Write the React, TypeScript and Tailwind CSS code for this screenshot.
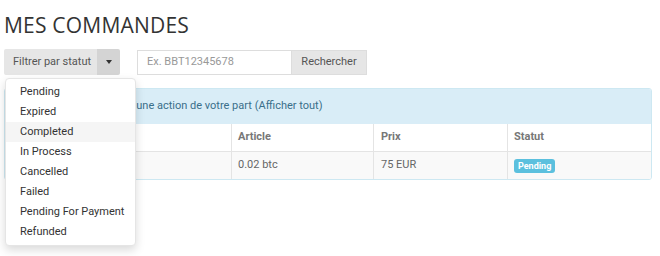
import React from "react";

const items = ["Pending", "Expired", "Completed", "In Process", "Cancelled", "Failed", "Pending For Payment", "Refunded"];

export default function App() {
  return (
    <div className="w-[660px] h-[256px] bg-white overflow-hidden pl-[4px] pr-[8px] pt-[12px]" style={{ fontFamily: "Roboto, 'Liberation Sans', sans-serif" }}>
      <h1 className="text-[21px] leading-[26px] text-[#333] tracking-[0.2px]" style={{ fontFamily: "'Open Sans', sans-serif" }}>MES COMMANDES</h1>
      <div className="flex mt-[11px] h-[26px] gap-[17px]">
        <div className="relative flex">
          <div className="flex items-center whitespace-nowrap h-[26px] bg-[#e6e6e6] text-[#555] text-[11px] pl-[9px] pr-[9px] w-[93px] rounded-l-[2px]">Filtrer par statut</div>
          <div className="flex items-center justify-center h-[26px] w-[23px] bg-[#d4d4d4] rounded-r-[2px]">
            <div className="w-0 h-0 border-l-[3px] border-r-[3px] border-t-[4px] border-l-transparent border-r-transparent border-t-[#333]" />
          </div>
          <div className="absolute left-[1px] top-[29px] w-[131px] bg-white rounded-[4px] border border-[#e5e5e5] shadow-[0_4px_10px_rgba(0,0,0,0.15)] py-[3px] z-10">
            {items.map((it) => (
              <div key={it} className={`h-[20px] leading-[20px] pl-[14px] text-[11px] text-[#333] whitespace-nowrap ${it === "Completed" ? "bg-[#f5f5f5]" : ""}`}>{it}</div>
            ))}
          </div>
        </div>
        <div className="flex h-[25px] mt-[1px]">
          <div className="w-[155px] h-[25px] border border-[#ddd] flex items-center pl-[9px] text-[11px] text-[#999] bg-white">Ex. BBT12345678</div>
          <div className="w-[75px] h-[25px] bg-[#e6e6e6] border border-l-0 border-[#ddd] flex items-center justify-center text-[11px] text-[#555]">Rechercher</div>
        </div>
      </div>
      <div className="mt-[13px] border border-[#cde8f2] rounded-[3px] overflow-hidden w-[648px]">
        <div className="h-[35px] bg-[#d9edf7] flex items-center pl-[6px] text-[11px] text-[#3a6f8a] whitespace-nowrap">
          <span>Commandes en attente d'une action de votre part</span>
          <span className="ml-[3px]">(Afficher tout)</span>
        </div>
        <div className="grid grid-cols-[226px_142px_134px_1fr] text-[11px]">
          <div className="h-[28px] border-b border-[#e4e4e4]" />
          <div className="h-[28px] border-l border-b border-[#e4e4e4] flex items-center pl-[6px] font-bold text-[#777]">Article</div>
          <div className="h-[28px] border-l border-b border-[#e4e4e4] flex items-center pl-[7px] font-bold text-[#777]">Prix</div>
          <div className="h-[28px] border-l border-b border-[#e4e4e4] flex items-center pl-[6px] font-bold text-[#777]">Statut</div>
          <div className="h-[27px] bg-[#f9f9f9]" />
          <div className="h-[27px] bg-[#f9f9f9] border-l border-[#e4e4e4] flex items-center pl-[6px] text-[#666]">0.02 btc</div>
          <div className="h-[27px] bg-[#f9f9f9] border-l border-[#e4e4e4] flex items-center pl-[7px] text-[#666]">75 EUR</div>
          <div className="h-[27px] bg-[#f9f9f9] border-l border-[#e4e4e4] flex items-center pl-[6px]">
            <span className="bg-[#5bc0de] text-white font-bold text-[9px] rounded-[3px] px-[4px] h-[14px] leading-[14px]">Pending</span>
          </div>
        </div>
      </div>
    </div>
  );
}
